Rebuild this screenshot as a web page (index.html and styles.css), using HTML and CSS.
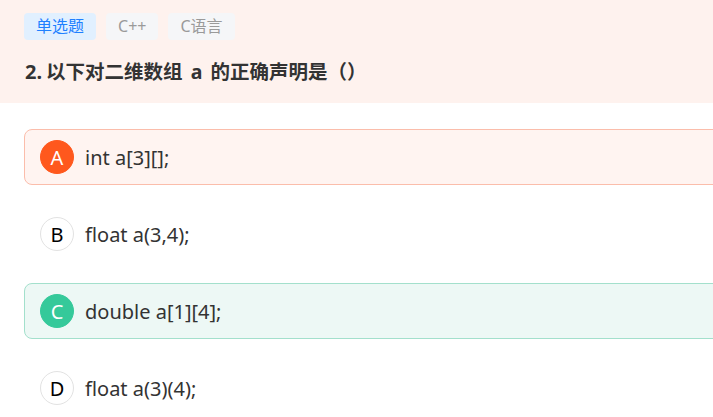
FILE: index.html
```html
<!DOCTYPE html>
<html lang="zh-CN">
<head>
<meta charset="utf-8">
<link rel="stylesheet" href="styles.css">
</head>
<body>
<div class="page">
  <header class="head">
    <div class="tags">
      <span class="tag tag-type">单选题</span>
      <span class="tag">C++</span>
      <span class="tag">C语言</span>
    </div>
    <h1 class="title"><span class="num">2.</span>以下对二维数组<span class="latin"> a </span>的正确声明是（）</h1>
  </header>
  <div class="options">
    <div class="opt opt-wrong"><span class="mark">A</span><span class="text">int a[3][];</span></div>
    <div class="opt"><span class="mark">B</span><span class="text">float a(3,4);</span></div>
    <div class="opt opt-right"><span class="mark">C</span><span class="text">double a[1][4];</span></div>
    <div class="opt"><span class="mark">D</span><span class="text">float a(3)(4);</span></div>
  </div>
</div>
</body>
</html>
```
FILE: styles.css
```css
html, body {
  margin: 0;
  padding: 0;
  background: #ffffff;
  overflow: hidden;
}
body {
  font-family: "Noto Sans", "Noto Sans CJK SC", sans-serif;
  color: #333333;
}
.page {
  width: 713px;
}
.head {
  background: #fef2ee;
  padding: 13px 24px 0 24px;
  height: 90px;
}
.tags {
  display: flex;
  gap: 10px;
}
.tag {
  height: 27px;
  line-height: 27px;
  padding: 0 12px;
  border-radius: 4px;
  background: #f5f6f8;
  color: #9a9a9a;
  font-size: 16px;
  font-family: "Noto Sans", "Noto Sans CJK SC", sans-serif;
}
.tag-type {
  background: #e1f0ff;
  color: #1e80ff;
}
.title {
  margin: 18px 0 0 1px;
  font-size: 19.5px;
  line-height: 26px;
  font-weight: bold;
  color: #333333;
  font-family: "Noto Sans CJK SC", sans-serif;
}
.num {
  font-family: "Noto Sans", sans-serif;
  font-size: 20px;
  margin-right: 4px;
}
.latin {
  font-family: "Noto Sans", sans-serif;
  word-spacing: 3px;
}
.options {
  padding: 26px 0 0 24px;
}
.opt {
  display: flex;
  align-items: center;
  gap: 11px;
  height: 56px;
  box-sizing: border-box;
  margin-right: -30px;
  margin-bottom: 21px;
  padding-left: 15px;
  border: 1px solid transparent;
  border-radius: 8px;
}
.opt-wrong {
  background: #fff4f1;
  border-color: #fbbdab;
}
.opt-right {
  background: #edf8f5;
  border-color: #a3e0cc;
}
.mark {
  width: 34px;
  height: 34px;
  box-sizing: border-box;
  border-radius: 50%;
  border: 1px solid #e2e2e2;
  background: #ffffff;
  color: #000000;
  display: flex;
  align-items: center;
  justify-content: center;
  font-size: 20px;
  font-family: "Noto Sans", sans-serif;
}
.opt-wrong .mark {
  background: #ff581d;
  border-color: #ff581d;
  color: #ffffff;
}
.opt-right .mark {
  background: #35c99a;
  border-color: #35c99a;
  color: #ffffff;
}
.text {
  font-size: 20px;
  color: #333333;
}
```
